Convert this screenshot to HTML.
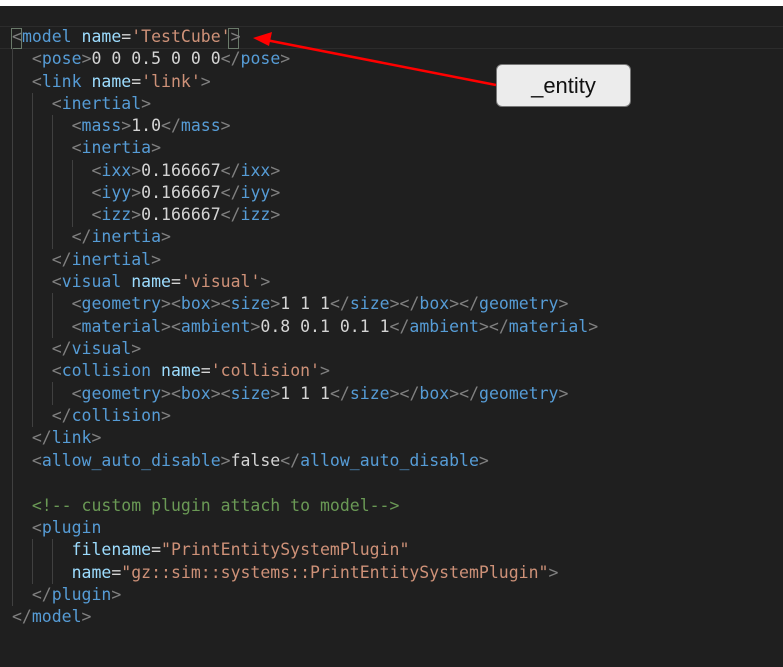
<!DOCTYPE html>
<html><head><style>
body{margin:0;width:783px;height:667px;background:#1f1f1f;overflow:hidden;position:relative;font-family:"DejaVu Sans Mono","Liberation Mono",monospace;}
.top{position:absolute;left:0;top:0;width:783px;height:6px;background:#fff}
.hl{position:absolute;left:0;top:26px;width:783px;height:21px;border-top:1px solid #2c2c2c;border-bottom:1px solid #2c2c2c}
.l{position:absolute;left:12px;height:22px;line-height:22px;font-size:16.5px;white-space:pre;color:#d4d4d4}
.b{color:#808080}.t{color:#569cd6}.a{color:#9cdcfe}.s{color:#ce9178}.c{color:#6a9955}
.g{position:absolute;width:1px;background:#404040}
.box{position:absolute;left:496px;top:64px;width:133px;height:41px;background:#ececec;border:1px solid #777;border-radius:6px;font-family:"Liberation Sans",Arial,sans-serif;font-size:22px;color:#111;text-align:center;line-height:41px}
.br{position:absolute;width:9px;height:19px;border:1px solid #6a7a6a;top:28px}
</style></head><body>
<div class="top"></div>
<div class="hl"></div>
<div class="br" style="left:11px"></div>
<div class="br" style="left:228px"></div>
<div class="g" style="left:12px;top:48px;height:558px"></div>
<div class="g" style="left:32px;top:93px;height:334px"></div>
<div class="g" style="left:32px;top:539px;height:45px"></div>
<div class="g" style="left:52px;top:115px;height:134px"></div>
<div class="g" style="left:52px;top:293px;height:45px"></div>
<div class="g" style="left:52px;top:382px;height:23px"></div>
<div class="g" style="left:52px;top:539px;height:45px"></div>
<div class="g" style="left:72px;top:160px;height:67px"></div>
<div class="l" style="top:26px"><span class="b">&lt;</span><span class="t">model</span> <span class="a">name</span>=<span class="s">'TestCube'</span><span class="b">&gt;</span></div>
<div class="l" style="top:48px">  <span class="b">&lt;</span><span class="t">pose</span><span class="b">&gt;</span>0 0 0.5 0 0 0<span class="b">&lt;/</span><span class="t">pose</span><span class="b">&gt;</span></div>
<div class="l" style="top:71px">  <span class="b">&lt;</span><span class="t">link</span> <span class="a">name</span>=<span class="s">'link'</span><span class="b">&gt;</span></div>
<div class="l" style="top:93px">    <span class="b">&lt;</span><span class="t">inertial</span><span class="b">&gt;</span></div>
<div class="l" style="top:115px">      <span class="b">&lt;</span><span class="t">mass</span><span class="b">&gt;</span>1.0<span class="b">&lt;/</span><span class="t">mass</span><span class="b">&gt;</span></div>
<div class="l" style="top:137px">      <span class="b">&lt;</span><span class="t">inertia</span><span class="b">&gt;</span></div>
<div class="l" style="top:160px">        <span class="b">&lt;</span><span class="t">ixx</span><span class="b">&gt;</span>0.166667<span class="b">&lt;/</span><span class="t">ixx</span><span class="b">&gt;</span></div>
<div class="l" style="top:182px">        <span class="b">&lt;</span><span class="t">iyy</span><span class="b">&gt;</span>0.166667<span class="b">&lt;/</span><span class="t">iyy</span><span class="b">&gt;</span></div>
<div class="l" style="top:204px">        <span class="b">&lt;</span><span class="t">izz</span><span class="b">&gt;</span>0.166667<span class="b">&lt;/</span><span class="t">izz</span><span class="b">&gt;</span></div>
<div class="l" style="top:226px">      <span class="b">&lt;/</span><span class="t">inertia</span><span class="b">&gt;</span></div>
<div class="l" style="top:249px">    <span class="b">&lt;/</span><span class="t">inertial</span><span class="b">&gt;</span></div>
<div class="l" style="top:271px">    <span class="b">&lt;</span><span class="t">visual</span> <span class="a">name</span>=<span class="s">'visual'</span><span class="b">&gt;</span></div>
<div class="l" style="top:293px">      <span class="b">&lt;</span><span class="t">geometry</span><span class="b">&gt;&lt;</span><span class="t">box</span><span class="b">&gt;&lt;</span><span class="t">size</span><span class="b">&gt;</span>1 1 1<span class="b">&lt;/</span><span class="t">size</span><span class="b">&gt;&lt;/</span><span class="t">box</span><span class="b">&gt;&lt;/</span><span class="t">geometry</span><span class="b">&gt;</span></div>
<div class="l" style="top:316px">      <span class="b">&lt;</span><span class="t">material</span><span class="b">&gt;&lt;</span><span class="t">ambient</span><span class="b">&gt;</span>0.8 0.1 0.1 1<span class="b">&lt;/</span><span class="t">ambient</span><span class="b">&gt;&lt;/</span><span class="t">material</span><span class="b">&gt;</span></div>
<div class="l" style="top:338px">    <span class="b">&lt;/</span><span class="t">visual</span><span class="b">&gt;</span></div>
<div class="l" style="top:360px">    <span class="b">&lt;</span><span class="t">collision</span> <span class="a">name</span>=<span class="s">'collision'</span><span class="b">&gt;</span></div>
<div class="l" style="top:383px">      <span class="b">&lt;</span><span class="t">geometry</span><span class="b">&gt;&lt;</span><span class="t">box</span><span class="b">&gt;&lt;</span><span class="t">size</span><span class="b">&gt;</span>1 1 1<span class="b">&lt;/</span><span class="t">size</span><span class="b">&gt;&lt;/</span><span class="t">box</span><span class="b">&gt;&lt;/</span><span class="t">geometry</span><span class="b">&gt;</span></div>
<div class="l" style="top:405px">    <span class="b">&lt;/</span><span class="t">collision</span><span class="b">&gt;</span></div>
<div class="l" style="top:427px">  <span class="b">&lt;/</span><span class="t">link</span><span class="b">&gt;</span></div>
<div class="l" style="top:450px">  <span class="b">&lt;</span><span class="t">allow_auto_disable</span><span class="b">&gt;</span>false<span class="b">&lt;/</span><span class="t">allow_auto_disable</span><span class="b">&gt;</span></div>
<div class="l" style="top:495px">  <span class="c">&lt;!-- custom plugin attach to model--&gt;</span></div>
<div class="l" style="top:517px">  <span class="b">&lt;</span><span class="t">plugin</span></div>
<div class="l" style="top:539px">      <span class="a">filename</span>=<span class="s">"PrintEntitySystemPlugin"</span></div>
<div class="l" style="top:562px">      <span class="a">name</span>=<span class="s">"gz::sim::systems::PrintEntitySystemPlugin"</span><span class="b">&gt;</span></div>
<div class="l" style="top:584px">  <span class="b">&lt;/</span><span class="t">plugin</span><span class="b">&gt;</span></div>
<div class="l" style="top:606px"><span class="b">&lt;/</span><span class="t">model</span><span class="b">&gt;</span></div>
<svg style="position:absolute;left:0;top:0" width="783" height="667">
<line x1="496" y1="85" x2="266" y2="40" stroke="#ff0000" stroke-width="2.5"/>
<polygon points="253,38 272,32 269,46" fill="#ff0000"/>
</svg>
<div class="box">_entity</div>
</body></html>
